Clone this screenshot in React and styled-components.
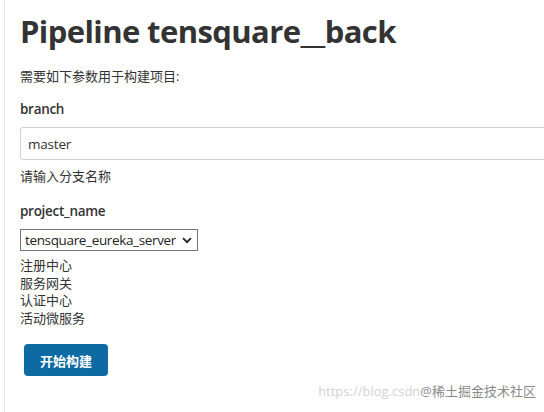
import React from 'react';
import styled, { createGlobalStyle } from 'styled-components';

const GlobalStyle = createGlobalStyle`
  html, body {
    margin: 0;
    padding: 0;
    background: #fff;
  }
  body {
    font-family: "Open Sans", "Noto Sans CJK SC", sans-serif;
    color: #333;
  }
`;

const Page = styled.div`
  position: relative;
  width: 544px;
  height: 412px;
  overflow: hidden;
`;

const Panel = styled.div`
  margin-left: 4px;
  height: 100%;
  border-left: 1px solid #e8e8e8;
  padding-left: 15px;
  display: flex;
  flex-direction: column;
  align-items: flex-start;
`;

const Title = styled.h1`
  margin: 12px 0 0;
  font-size: 31px;
  line-height: 38px;
  font-weight: 700;
  letter-spacing: -0.6px;
  color: #333;
  white-space: nowrap;
`;

const Text = styled.div`
  margin-top: ${({ gap }) => gap || 0}px;
  font-size: 13px;
  line-height: 18px;
  color: #333;
`;

const Label = styled.div`
  margin-top: ${({ gap }) => gap}px;
  font-size: 13.5px;
  line-height: 18px;
  font-weight: 600;
  letter-spacing: -0.3px;
  color: #333;
`;

const TextInput = styled.div`
  margin-top: 9px;
  box-sizing: border-box;
  width: 560px;
  height: 33px;
  border: 1px solid #cfcfcf;
  border-radius: 3px;
  padding: 0 7px;
  display: flex;
  align-items: center;
  font-size: 13.5px;
  letter-spacing: -0.2px;
  color: #333;
`;

const Select = styled.div`
  margin-top: 9px;
  box-sizing: border-box;
  width: 178px;
  height: 22px;
  border: 1px solid #767676;
  padding: 0 5px 0 4px;
  display: flex;
  align-items: center;
  justify-content: space-between;
  gap: 4px;
  font-size: 13.5px;
  letter-spacing: -0.35px;
  color: #222;
`;

const Option = styled.span`
  white-space: nowrap;
  overflow: hidden;
`;

const List = styled.div`
  margin-top: 6px;
  font-size: 13px;
  line-height: 17.6px;
  color: #333;
`;

const BuildButton = styled.button`
  margin: 17px 0 0 4px;
  width: 84px;
  height: 32px;
  border: none;
  border-radius: 4px;
  background: #0e6aa3;
  color: #fff;
  font-family: "Noto Sans CJK SC", sans-serif;
  font-size: 13px;
  font-weight: 700;
  padding: 0;
`;

const Watermark = styled.div`
  position: absolute;
  right: 8px;
  bottom: 13px;
  font-size: 13px;
  line-height: 16px;
  color: #d2d2d2;
  white-space: nowrap;
  & > span {
    color: #8a8a8a;
  }
`;

const Chevron = () => (
  <svg width="10" height="7" viewBox="0 0 10 7" style={{ flexShrink: 0 }}>
    <path d="M1 1.2 L5 5.2 L9 1.2" fill="none" stroke="#222" strokeWidth="1.8" />
  </svg>
);

const services = ['注册中心', '服务网关', '认证中心', '活动微服务'];

const App = () => (
  <Page>
    <GlobalStyle />
    <Panel>
      <Title>Pipeline tensquare__back</Title>
      <Text gap={17}>需要如下参数用于构建项目:</Text>
      <Label gap={15}>branch</Label>
      <TextInput>master</TextInput>
      <Text gap={7}>请输入分支名称</Text>
      <Label gap={17}>project_name</Label>
      <Select>
        <Option>tensquare_eureka_server</Option>
        <Chevron />
      </Select>
      <List>
        {services.map((s) => (
          <div key={s}>{s}</div>
        ))}
      </List>
      <BuildButton>开始构建</BuildButton>
    </Panel>
    <Watermark>
      https://blog.csdn<span>@稀土掘金技术社区</span>
    </Watermark>
  </Page>
);

export default App;
